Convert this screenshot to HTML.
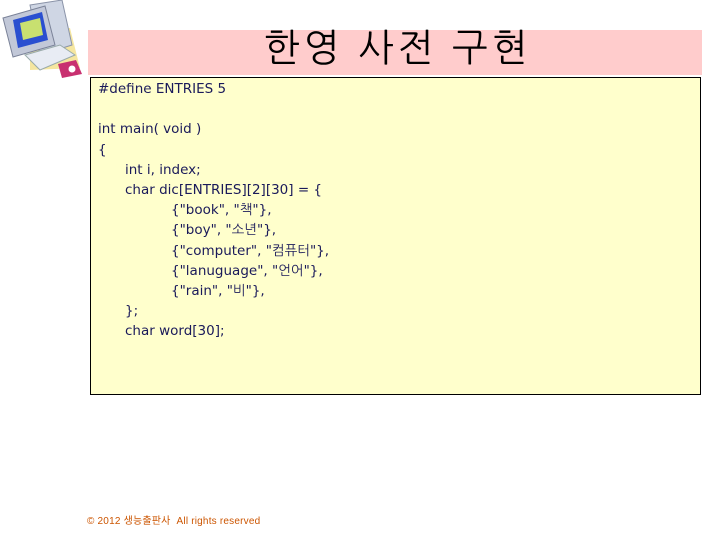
<!DOCTYPE html>
<html><head><meta charset="utf-8"><style>
body{margin:0;width:720px;height:540px;background:#fff;position:relative;overflow:hidden;font-family:"Liberation Sans","Noto Sans CJK KR",sans-serif}
.pink{position:absolute;left:88px;top:30px;width:614px;height:45px;background:#ffcccc}
.title{position:absolute;left:264px;top:25px;font-size:38px;color:#000;font-family:"Liberation Sans","NanumGothic","Noto Sans CJK KR",sans-serif;letter-spacing:4px;line-height:48px;font-weight:normal}
.box{position:absolute;left:90px;top:77px;width:609px;height:316px;background:#ffffcc;border:1px solid #000}
.code{position:absolute;left:98px;top:79px;line-height:20.2px;color:#1a1a5a;font-family:"DejaVu Sans","NanumGothic",sans-serif;font-size:13.5px}
.code div{white-space:pre;height:20.2px}
.i1{padding-left:27px}.i2{padding-left:73px}
.foot{position:absolute;left:87px;top:512px;font-size:10px;color:#cc5500;letter-spacing:0.2px}
</style></head><body>
<svg style="position:absolute;left:0;top:0" width="85" height="80" viewBox="0 0 85 80">
<polygon points="30,30 70,28 80,68 30,70" fill="#f5e6a0"/>
<polygon points="30,5 62,0 72,45 40,55" fill="#cfd6e4" stroke="#8a93a8"/>
<polygon points="3,18 45,6 55,45 13,57" fill="#c2c8d8" stroke="#7a8298"/>
<polygon points="13,20 42,12 48,40 18,48" fill="#2a4fd0"/>
<polygon points="20,23 40,18 43,35 23,40" fill="#c8e070"/>
<polygon points="25,55 60,45 75,55 40,70" fill="#e8ecf4" stroke="#9aa"/>
<polygon points="58,64 76,60 82,74 62,78" fill="#c83070"/>
<circle cx="72" cy="69" r="3.5" fill="#fff"/>
</svg>
<div class="pink"></div>
<div class="title">한영 사전 구현</div>
<div class="box"></div>
<div class="code">
<div>#define ENTRIES 5</div>
<div></div>
<div>int main( void )</div>
<div>{</div>
<div class="i1">int i, index;</div>
<div class="i1">char dic[ENTRIES][2][30] = {</div>
<div class="i2">{"book", "책"},</div>
<div class="i2">{"boy", "소년"},</div>
<div class="i2">{"computer", "컴퓨터"},</div>
<div class="i2">{"lanuguage", "언어"},</div>
<div class="i2">{"rain", "비"},</div>
<div class="i1">};</div>
<div class="i1">char word[30];</div>
</div>
<div class="foot">© 2012 생능출판사 &nbsp;All rights reserved</div>
</body></html>
